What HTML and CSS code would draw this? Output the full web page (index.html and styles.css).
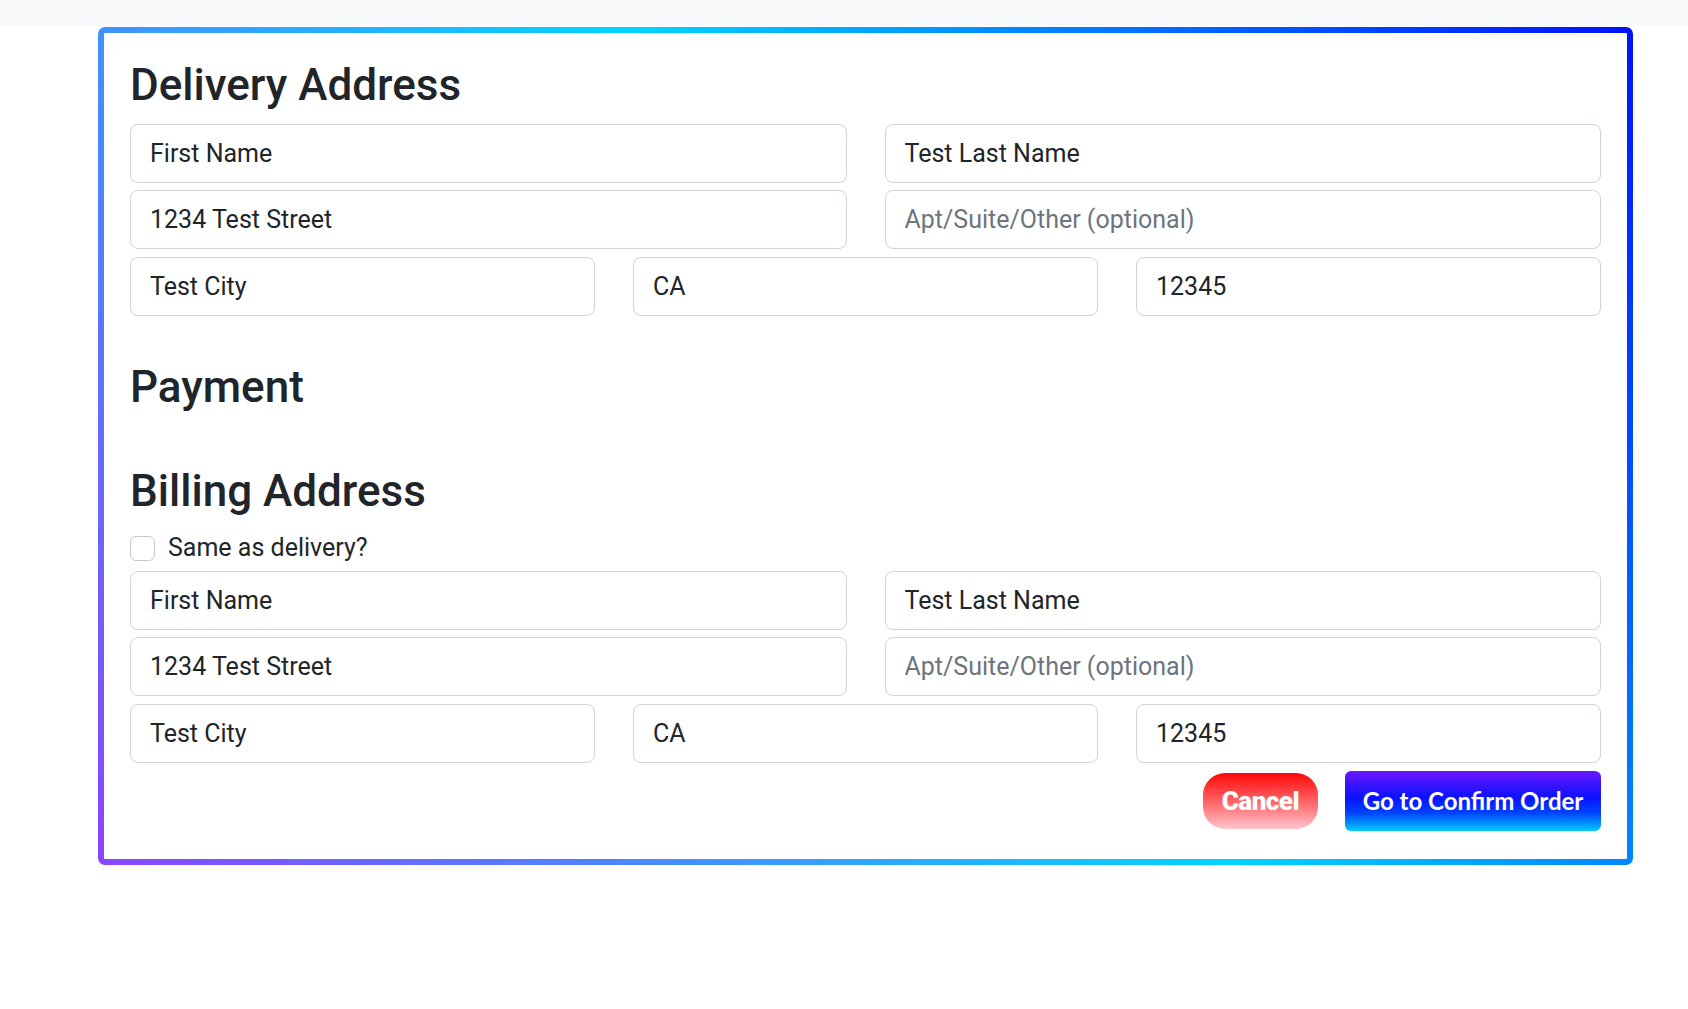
FILE: index.html
```html
<!DOCTYPE html>
<html lang="en">
<head>
<meta charset="utf-8">
<title>Checkout</title>
<link rel="stylesheet" href="styles.css">
</head>
<body>
<div class="topbar"></div>
<main class="card">
  <h2 class="section-title first">Delivery Address</h2>
  <div class="rows">
    <div class="row two">
      <input class="field" type="text" value="First Name">
      <input class="field" type="text" value="Test Last Name">
    </div>
    <div class="row two">
      <input class="field" type="text" value="1234 Test Street">
      <input class="field" type="text" placeholder="Apt/Suite/Other (optional)">
    </div>
    <div class="row three">
      <input class="field" type="text" value="Test City">
      <input class="field" type="text" value="CA">
      <input class="field" type="text" value="12345">
    </div>
  </div>

  <h2 class="section-title payment">Payment</h2>

  <h2 class="section-title billing">Billing Address</h2>
  <label class="check-row">
    <span class="checkbox"></span>
    <span class="check-label">Same as delivery?</span>
  </label>
  <div class="rows">
    <div class="row two">
      <input class="field" type="text" value="First Name">
      <input class="field" type="text" value="Test Last Name">
    </div>
    <div class="row two">
      <input class="field" type="text" value="1234 Test Street">
      <input class="field" type="text" placeholder="Apt/Suite/Other (optional)">
    </div>
    <div class="row three">
      <input class="field" type="text" value="Test City">
      <input class="field" type="text" value="CA">
      <input class="field" type="text" value="12345">
    </div>
  </div>

  <div class="actions">
    <button class="btn-cancel" type="button">Cancel</button>
    <button class="btn-confirm" type="button">Go to Confirm Order</button>
  </div>
</main>
</body>
</html>
```

FILE: styles.css
```css
* {
  box-sizing: border-box;
}

html, body {
  margin: 0;
  padding: 0;
  background: #ffffff;
}

body {
  font-family: Roboto, "Liberation Sans", sans-serif;
  color: #212529;
  font-size: 25px;
  line-height: 1.5;
}

.topbar {
  height: 26px;
  background: #f8f9fa;
}

.card {
  display: block;
  margin: 1px 0 0 98px;
  width: 1535px;
  border: 6px solid transparent;
  border-radius: 7px;
  background:
    linear-gradient(#ffffff, #ffffff) padding-box,
    linear-gradient(54deg, #8b45ff 0%, #00d4ff 53%, #0010ff 100%) border-box;
  padding: 25.6px 26px 28px 26px;
}

.section-title {
  margin: 0;
  font-family: Roboto, "Liberation Sans", sans-serif;
  font-weight: 500;
  font-size: 44px;
  line-height: 1.2;
  color: #212529;
}

.section-title.first {
  margin-bottom: 12.6px;
}

.section-title.payment {
  margin-top: 44.6px;
}

.section-title.billing {
  margin-top: 51.2px;
}

.rows {
  display: flex;
  flex-direction: column;
  gap: 7.5px;
}

.row {
  display: grid;
  column-gap: 38px;
}

.row.two {
  grid-template-columns: 1fr 1fr;
}

.row.three {
  grid-template-columns: 1fr 1fr 1fr;
}

.field {
  display: block;
  width: 100%;
  height: 59px;
  margin: 0;
  padding: 0 19px;
  border: 1px solid #ced4da;
  border-radius: 8px;
  background: #ffffff;
  font-family: Roboto, "Liberation Sans", sans-serif;
  font-size: 25px;
  color: #212529;
  outline: none;
}

.field::placeholder {
  color: #6c757d;
  opacity: 1;
}

.check-row {
  display: flex;
  align-items: center;
  gap: 13px;
  margin: 12px 0 4px 0;
  height: 37.5px;
}

.checkbox {
  display: block;
  width: 25px;
  height: 25px;
  border: 1px solid #c4c9cf;
  border-radius: 6px;
  background: #ffffff;
}

.check-label {
  font-size: 25px;
  line-height: 1.5;
}

.actions {
  display: flex;
  justify-content: flex-end;
  align-items: center;
  gap: 27px;
  margin-top: 8px;
}

.btn-cancel {
  height: 56px;
  width: 115px;
  padding: 0;
  border: none;
  border-radius: 22px;
  background: linear-gradient(to bottom, #ff0808 0%, #ff6b6e 55%, #ffc5cc 100%);
  color: #ffffff;
  font-family: Roboto, "Liberation Sans", sans-serif;
  font-weight: 900;
  font-size: 26px;
  letter-spacing: -0.5px;
}

.btn-confirm {
  height: 60px;
  width: 256px;
  padding: 0;
  border: none;
  border-radius: 6px;
  background: linear-gradient(to bottom, #6b16ff 0%, #0a12ff 45%, #0044ff 70%, #00cbff 100%);
  color: #ffffff;
  font-family: Lato, "Open Sans", sans-serif;
  font-weight: 700;
  font-size: 24px;
}
```
